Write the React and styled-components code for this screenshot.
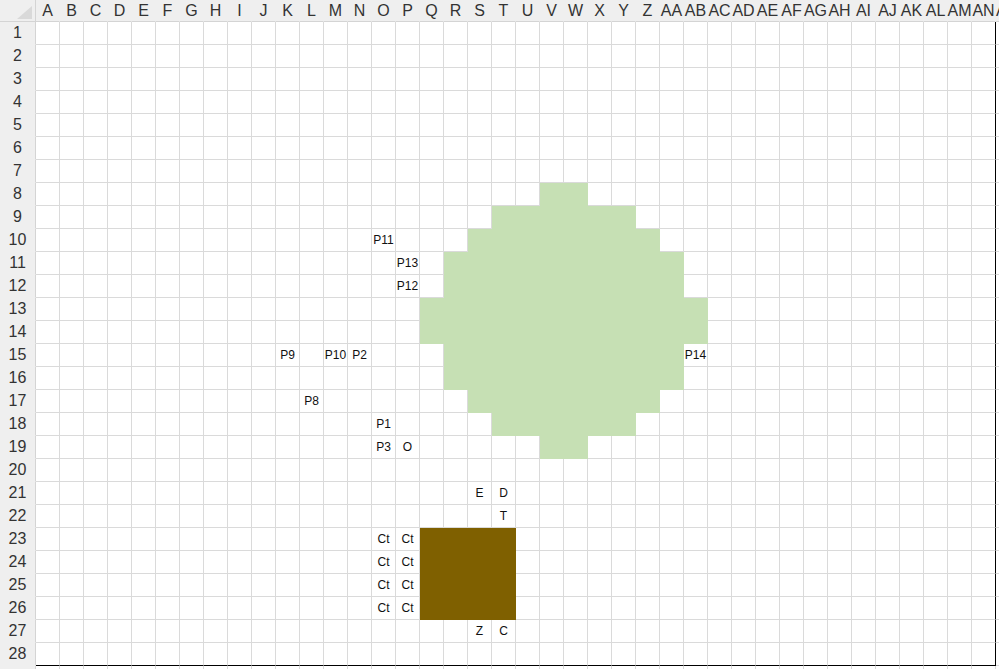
import React from "react";
import styled, { createGlobalStyle } from "styled-components";

const COLS = 41;
const ROWS = 29;
const GREEN = "#c6e0b4";
const BROWN = "#7f6000";

const GlobalStyle = createGlobalStyle`
  html, body {
    margin: 0;
    padding: 0;
    background: #ffffff;
    overflow: hidden;
  }
`;

const Sheet = styled.div`
  width: 999px;
  height: 669px;
  overflow: hidden;
  font-family: "Liberation Sans", Arial, sans-serif;
`;

const Grid = styled.div`
  display: grid;
  grid-template-columns: 36px repeat(${COLS}, 24px);
  grid-template-rows: 22px repeat(${ROWS}, 23px);
`;

const Corner = styled.div`
  box-sizing: border-box;
  background: #efefef;
  border-right: 1px solid #d4d4d4;
  border-bottom: 1px solid #d4d4d4;
  display: flex;
  justify-content: flex-end;
  align-items: flex-end;
  padding: 0 3px 2px 0;
`;

const Triangle = styled.div`
  width: 0;
  height: 0;
  border-left: 15px solid transparent;
  border-bottom: 13px solid #d9d9d9;
`;

const Header = styled.div`
  box-sizing: border-box;
  background: #efefef;
  border-right: 1px solid ${(p) => (p.$row ? "#d4d4d4" : "#efefef")};
  border-bottom: 1px solid ${(p) => (p.$row ? "#efefef" : "#d4d4d4")};
  display: flex;
  align-items: center;
  justify-content: center;
  font-size: 16px;
  color: #333333;
  white-space: nowrap;
`;

const Cell = styled.div`
  box-sizing: border-box;
  background: ${(p) => p.$fill || "#ffffff"};
  border-right: 1px solid ${(p) => (p.$edgeRight ? "#000000" : p.$fill || "#dadada")};
  border-bottom: 1px solid ${(p) => (p.$edgeBottom ? "#000000" : p.$fill || "#dadada")};
  display: flex;
  align-items: center;
  justify-content: center;
  font-size: 12px;
  color: #111111;
  white-space: nowrap;
`;

// filled ranges: [row, firstCol, lastCol, colour], columns 1-based (A = 1)
const fills = [
  [8, 22, 23, GREEN],
  [9, 20, 25, GREEN],
  [10, 19, 26, GREEN],
  [11, 18, 27, GREEN],
  [12, 18, 27, GREEN],
  [13, 17, 28, GREEN],
  [14, 17, 28, GREEN],
  [15, 18, 27, GREEN],
  [16, 18, 27, GREEN],
  [17, 19, 26, GREEN],
  [18, 20, 25, GREEN],
  [19, 22, 23, GREEN],
  [23, 17, 20, BROWN],
  [24, 17, 20, BROWN],
  [25, 17, 20, BROWN],
  [26, 17, 20, BROWN],
];

const labels = {
  "10,15": "P11",
  "11,16": "P13",
  "12,16": "P12",
  "15,11": "P9",
  "15,13": "P10",
  "15,14": "P2",
  "15,28": "P14",
  "17,12": "P8",
  "18,15": "P1",
  "19,15": "P3",
  "19,16": "O",
  "21,19": "E",
  "21,20": "D",
  "22,20": "T",
  "23,15": "Ct",
  "23,16": "Ct",
  "24,15": "Ct",
  "24,16": "Ct",
  "25,15": "Ct",
  "25,16": "Ct",
  "26,15": "Ct",
  "26,16": "Ct",
  "27,19": "Z",
  "27,20": "C",
};

const colName = (n) => {
  let s = "";
  while (n > 0) {
    const r = (n - 1) % 26;
    s = String.fromCharCode(65 + r) + s;
    n = Math.floor((n - 1) / 26);
  }
  return s;
};

const fillAt = (row, col) => {
  const hit = fills.find(([r, a, b]) => r === row && col >= a && col <= b);
  return hit ? hit[3] : null;
};

export default function App() {
  const cells = [<Corner key="corner"><Triangle /></Corner>];

  for (let c = 1; c <= COLS; c++) {
    cells.push(<Header key={`h${c}`}>{colName(c)}</Header>);
  }

  for (let r = 1; r <= ROWS; r++) {
    // last row only peeks in under the frame, its number stays below the fold
    cells.push(
      <Header key={`r${r}`} $row>
        {r < ROWS ? r : null}
      </Header>
    );
    for (let c = 1; c <= COLS; c++) {
      cells.push(
        <Cell
          key={`${r}-${c}`}
          $fill={fillAt(r, c)}
          $edgeRight={c === 40 && r <= 28}
          $edgeBottom={r === 28 && c <= 40}
        >
          {labels[`${r},${c}`]}
        </Cell>
      );
    }
  }

  return (
    <Sheet>
      <GlobalStyle />
      <Grid>{cells}</Grid>
    </Sheet>
  );
}
